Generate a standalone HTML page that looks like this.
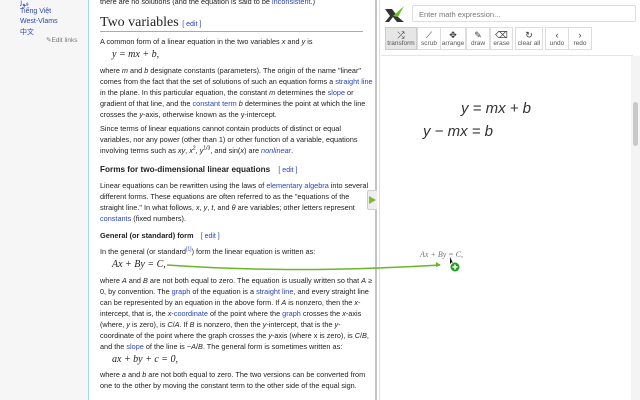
<!DOCTYPE html>
<html><head><meta charset="utf-8"><style>
*{margin:0;padding:0;box-sizing:border-box}
body{width:640px;height:400px;overflow:hidden;background:#fff;font-family:"Liberation Sans",sans-serif;position:relative;font-size:8px;color:#222}
.a{position:absolute;white-space:nowrap}
.side{left:0;top:0;width:89px;height:400px;background:#f6f6f6;border-right:1px solid #a7d7f9}
a,.l{color:#2a44b5;text-decoration:none}
sup{line-height:0;font-size:5px}
.p{position:absolute;left:100px;font-size:7.3px;line-height:11px;white-space:nowrap}
.m{font-family:"Liberation Serif",serif;font-style:italic;font-size:10px}
.ed{color:#2a44b5;font-size:7px}
.btn{position:absolute;top:27px;height:23px;border:1px solid #ddd;font-size:6.5px;color:#555;text-align:center;padding-top:12px;background:#fff}
.btn i{position:absolute;top:2px;left:0;right:0;font-style:normal;font-size:9px;color:#333}
.hw{font-family:"Liberation Sans",sans-serif;font-style:italic;font-size:15px;color:#333}
</style></head><body>
<div class="a side"></div>
<div class="a l" style="left:20px;top:0;font-size:7px">ﺀﻮﻟ</div>
<div class="a l" style="left:20px;top:8px;font-size:7px">Tiếng Việt</div>
<div class="a l" style="left:20px;top:18px;font-size:7px">West-Vlams</div>
<div class="a l" style="left:20px;top:27px;font-size:7px;font-family:'Liberation Sans','Noto Sans CJK SC',sans-serif">中文</div>
<div class="a" style="left:46px;top:36px;font-size:6.5px;color:#777">✎Edit links</div>

<div class="p" style="top:-4px">there are no solutions (and the equation is said to be <a>inconsistent</a>.)</div>
<div class="a" style="left:100px;top:15px;font-family:'Liberation Serif',serif;font-size:14px">Two variables <span class="ed" style="font-family:'Liberation Sans'">[ edit ]</span></div>
<div class="a" style="left:100px;top:31px;width:263px;height:1px;background:#aaa"></div>
<div class="p" style="top:36px">A common form of a linear equation in the two variables <i>x</i> and <i>y</i> is</div>
<div class="a m" style="left:112px;top:49px">y = mx + b,</div>
<div class="p" style="top:65px">where <i>m</i> and <i>b</i> designate constants (parameters). The origin of the name "linear"<br>comes from the fact that the set of solutions of such an equation forms a <a>straight line</a><br>in the plane. In this particular equation, the constant <i>m</i> determines the <a>slope</a> or<br>gradient of that line, and the <a>constant term</a> <i>b</i> determines the point at which the line<br>crosses the <i>y</i>-axis, otherwise known as the y-intercept.</div>
<div class="p" style="top:123px">Since terms of linear equations cannot contain products of distinct or equal<br>variables, nor any power (other than 1) or other function of a variable, equations<br>involving terms such as <i>xy</i>, <i>x</i><sup>2</sup>, <i>y</i><sup>1/3</sup>, and sin(<i>x</i>) are <a><i>nonlinear</i></a>.</div>
<div class="a" style="left:100px;top:165px;font-size:8.2px;font-weight:bold">Forms for two-dimensional linear equations <span class="ed" style="font-weight:normal;margin-left:6px">[ edit ]</span></div>
<div class="p" style="top:180px">Linear equations can be rewritten using the laws of <a>elementary algebra</a> into several<br>different forms. These equations are often referred to as the "equations of the<br>straight line." In what follows, <i>x</i>, <i>y</i>, <i>t</i>, and <i>θ</i> are variables; other letters represent<br><a>constants</a> (fixed numbers).</div>
<div class="a" style="left:100px;top:231px;font-size:7.4px;font-weight:bold">General (or standard) form <span class="ed" style="font-weight:normal;margin-left:5px">[ edit ]</span></div>
<div class="p" style="top:246px">In the general (or standard<sup style="color:#2a44b5">[1]</sup>) form the linear equation is written as:</div>
<div class="a m" style="left:112px;top:259px">Ax + By = C,</div>
<div class="p" style="top:275px">where <i>A</i> and <i>B</i> are not both equal to zero. The equation is usually written so that <i>A</i> ≥<br>0, by convention. The <a>graph</a> of the equation is a <a>straight line</a>, and every straight line<br>can be represented by an equation in the above form. If <i>A</i> is nonzero, then the <i>x</i>-<br>intercept, that is, the <i>x</i>-<a>coordinate</a> of the point where the <a>graph</a> crosses the <i>x</i>-axis<br>(where, <i>y</i> is zero), is <i>C</i>/<i>A</i>. If <i>B</i> is nonzero, then the <i>y</i>-intercept, that is the <i>y</i>-<br>coordinate of the point where the graph crosses the <i>y</i>-axis (where x is zero), is <i>C</i>/<i>B</i>,<br>and the <a>slope</a> of the line is −<i>A</i>/<i>B</i>. The general form is sometimes written as:</div>
<div class="a m" style="left:112px;top:354px">ax + by + c = 0,</div>
<div class="p" style="top:369px">where <i>a</i> and <i>b</i> are not both equal to zero. The two versions can be converted from<br>one to the other by moving the constant term to the other side of the equal sign.</div>

<div class="a" style="left:375px;top:0;width:2px;height:400px;background:#c4c4c4"></div>
<div class="a" style="left:379px;top:0;width:1px;height:400px;background:#ddd"></div>
<div class="a" style="left:367px;top:190px;width:10px;height:20px;background:#eee;border:1px solid #ccc;border-right:none;border-radius:2px 0 0 2px"></div>
<div class="a" style="left:369px;top:196px;width:0;height:0;border-left:7px solid #7cbb2a;border-top:4.5px solid transparent;border-bottom:4.5px solid transparent"></div>

<svg class="a" style="left:384px;top:5px" width="22" height="18" viewBox="0 0 22 18"><path d="M1 4 L8 4 L14 12 L20 17 L13 17 L9 12 L5 17 L1 17 L6 11 Z" fill="#333"/><path d="M9 11 L20 1 L14 12 Z" fill="#6bbf1f"/></svg>
<div class="a" style="left:412px;top:5px;width:224px;height:17px;border:1px solid #ddd;border-radius:2px;font-size:7.5px;color:#777;padding:4px 0 0 6px">Enter math expression...</div>
<div class="btn" style="left:385px;width:32px;background:#e6e6e6;border-color:#ccc"><i>⤮</i>transform</div>
<div class="btn" style="left:417px;width:24px"><i>⟋</i>scrub</div>
<div class="btn" style="left:440px;width:26px"><i>✥</i>arrange</div>
<div class="btn" style="left:466px;width:24px"><i>✎</i>draw</div>
<div class="btn" style="left:490px;width:23px"><i>⌫</i>erase</div>
<div class="btn" style="left:515px;width:28px"><i>↻</i>clear all</div>
<div class="btn" style="left:545px;width:24px"><i>‹</i>undo</div>
<div class="btn" style="left:568px;width:24px"><i>›</i>redo</div>
<div class="a" style="left:381px;top:55px;width:252px;height:1px;background:#e4e4e4"></div>
<div class="a hw" style="left:461px;top:100px">y = mx + b</div>
<div class="a hw" style="left:423px;top:123px">y − mx = b</div>
<div class="a" style="left:631px;top:56px;width:9px;height:344px;background:#f4f4f4"></div>
<div class="a" style="left:633px;top:102px;width:5px;height:44px;background:#c8c8c8;border-radius:3px"></div>
<div class="a m" style="left:420px;top:250px;font-size:8px;color:#777">Ax + By = C,</div>

<svg class="a" style="left:0;top:0" width="640" height="400"><path d="M167 265 C 240 270, 320 272, 440 265" stroke="#6ab62a" stroke-width="1.5" fill="none"/><path d="M436 262 L441 265 L436 267 Z" fill="#6ab62a"/><path d="M450 257 L450 264 L452 262 L454 265 Z" fill="#111"/><circle cx="455" cy="267" r="4.5" fill="#21a021"/><path d="M455 264.5 V269.5 M452.5 267 H457.5" stroke="#fff" stroke-width="1.5"/></svg>
</body></html>
